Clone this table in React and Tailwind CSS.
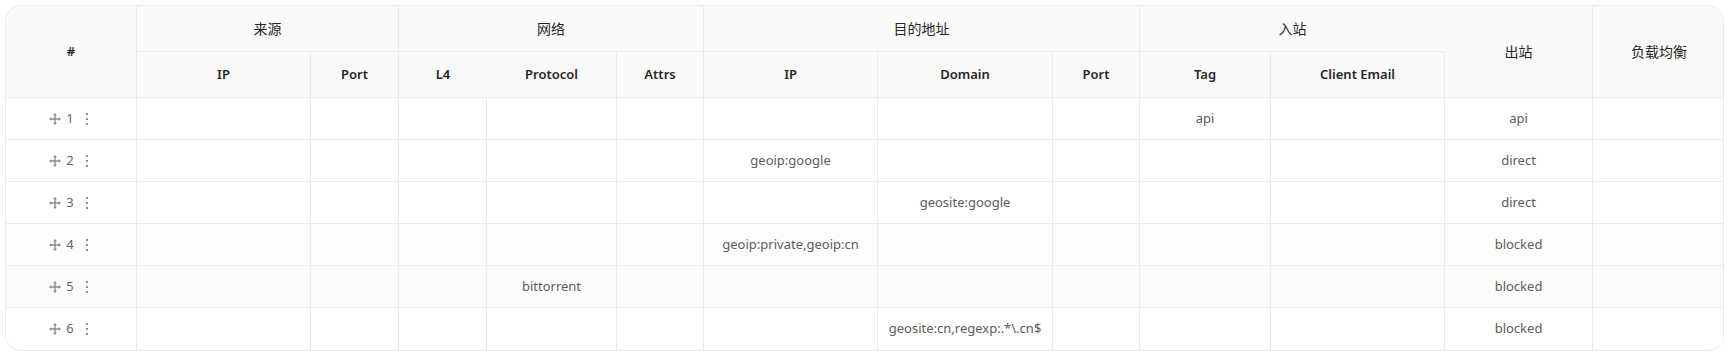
import React from 'react';

const font = { fontFamily: '"Noto Sans", "Noto Sans CJK SC", sans-serif' };

const colWidths = [131, 174, 88, 88, 130, 87, 174, 175, 87, 131, 174, 148, 132];

const rows = [
  { id: 1, tag: 'api', out: 'api' },
  { id: 2, destIp: 'geoip:google', out: 'direct' },
  { id: 3, domain: 'geosite:google', out: 'direct' },
  { id: 4, destIp: 'geoip:private,geoip:cn', out: 'blocked', bg: 'bg-[#fdfdfd]' },
  { id: 5, protocol: 'bittorrent', out: 'blocked', bg: 'bg-[#fafcfc]' },
  { id: 6, domain: 'geosite:cn,regexp:.*\\.cn$', out: 'blocked' },
];

// four-way move handle
const DragIcon = () => (
  <svg width="12" height="12" viewBox="0 0 12 12" className="text-[#8c8c8c]">
    <path d="M6 1.5v9M1.5 6h9" stroke="currentColor" strokeWidth="1.4" />
    <path d="M6 0l-2 2.2h4zM6 12l-2-2.2h4zM0 6l2.2-2v4zM12 6l-2.2-2v4z" fill="currentColor" />
  </svg>
);

const MoreIcon = () => (
  <svg width="4" height="14" viewBox="0 0 4 14" className="text-[#8c8c8c]">
    <rect x="1" y="1" width="2" height="2" fill="currentColor" />
    <rect x="1" y="6" width="2" height="2" fill="currentColor" />
    <rect x="1" y="11" width="2" height="2" fill="currentColor" />
  </svg>
);

const th = 'bg-[#fafafa] text-[#262626] text-center align-middle p-0 border-[#ebebeb]';
const thEn = `${th} text-[13px] font-semibold`;
const thCn = `${th} text-[14px] font-normal`;
const td = 'h-[42px] p-0 text-center align-middle text-[13px] text-[#5c5c5c] border-r border-b border-[#ebebeb]';

const App = () => {
  return (
    <div className="w-[1730px] h-[358px] bg-white p-[5px] pr-[6px]" style={font}>
      <div className="border border-[#ebebeb] rounded-[16px] overflow-hidden">
        <table className="w-full table-fixed border-separate border-spacing-0">
          <colgroup>
            {colWidths.map((w, i) => (
              <col key={i} style={{ width: w }} />
            ))}
          </colgroup>
          <thead>
            <tr className="h-[46px]">
              <th rowSpan={2} className={`${thEn} border-r border-b`}>#</th>
              <th colSpan={2} className={`${thCn} border-r border-b`}>来源</th>
              <th colSpan={3} className={`${thCn} border-r border-b`}>网络</th>
              <th colSpan={3} className={`${thCn} border-r border-b`}>目的地址</th>
              <th colSpan={2} className={`${thCn} border-b`}>入站</th>
              <th rowSpan={2} className={`${thCn} border-r border-b`}>出站</th>
              <th rowSpan={2} className={`${thCn} border-b`}>负载均衡</th>
            </tr>
            <tr className="h-[46px]">
              <th className={`${thEn} border-r border-b`}>IP</th>
              <th className={`${thEn} border-r border-b`}>Port</th>
              <th className={`${thEn} border-b`}>L4</th>
              <th className={`${thEn} border-r border-b`}>Protocol</th>
              <th className={`${thEn} border-r border-b`}>Attrs</th>
              <th className={`${thEn} border-r border-b`}>IP</th>
              <th className={`${thEn} border-r border-b`}>Domain</th>
              <th className={`${thEn} border-r border-b`}>Port</th>
              <th className={`${thEn} border-r border-b`}>Tag</th>
              <th className={`${thEn} border-r border-b`}>Client Email</th>
            </tr>
          </thead>
          <tbody>
            {rows.map((r, idx) => {
              const last = idx === rows.length - 1;
              const cls = `${td} ${last ? 'border-b-0' : ''}`;
              return (
                <tr key={r.id} className={r.bg || 'bg-white'}>
                  <td className={cls}>
                    <div className="flex items-center justify-center gap-[5px] pr-[4px]">
                      <DragIcon />
                      <span className="text-[#666]">{r.id}</span>
                      <span className="ml-[6px] flex"><MoreIcon /></span>
                    </div>
                  </td>
                  <td className={cls}></td>
                  <td className={cls}></td>
                  <td className={cls}></td>
                  <td className={cls}>{r.protocol}</td>
                  <td className={cls}></td>
                  <td className={cls}>{r.destIp}</td>
                  <td className={cls}>{r.domain}</td>
                  <td className={cls}></td>
                  <td className={cls}>{r.tag}</td>
                  <td className={cls}></td>
                  <td className={cls}>{r.out}</td>
                  <td className={`${cls} border-r-0`}></td>
                </tr>
              );
            })}
          </tbody>
        </table>
      </div>
    </div>
  );
};

export default App;
